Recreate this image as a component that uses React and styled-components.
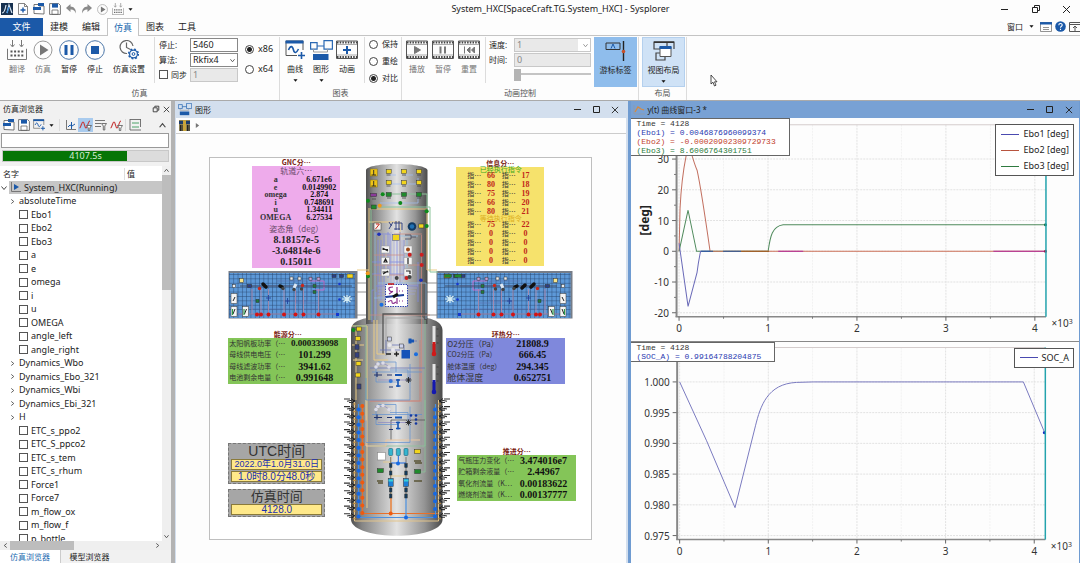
import React from 'react'
import styled, { createGlobalStyle, css } from 'styled-components'

const GlobalStyle = createGlobalStyle`
  * { box-sizing: border-box; }
  body {
    margin: 0;
    background: #fdfdfd;
    color: #222;
    font: 9px/12px 'Noto Sans', 'Noto Sans CJK SC', sans-serif;
    overflow: hidden;
  }
  button, input, select {
    font: inherit;
    color: inherit;
    margin: 0;
    padding: 0;
    border-radius: 0;
  }
  button {
    border: 0;
    background: none;
  }
  svg { display: block; flex: none; }
`

const BLUE = '#1b59a8'

/* ---------- shell ---------- */

const Shell = styled.div`
  height: 100vh;
  display: flex;
  flex-direction: column;
`

const TitleBar = styled.header`
  height: 18px;
  display: grid;
  grid-template-columns: 1fr auto 1fr;
  align-items: center;
  padding: 0 8px 0 1px;
`

const QuickAccess = styled.div`
  display: flex;
  align-items: center;
  gap: 4px;
`

const AppTitle = styled.h1`
  margin: 0 0 0 48px;
  font-size: 9px;
  font-weight: 400;
`

const WindowButtons = styled.div`
  display: flex;
  justify-content: flex-end;
  gap: ${({ gap }) => gap || 8}px;
`

const IconButton = styled.button`
  display: flex;
  align-items: center;
  justify-content: center;
  height: 14px;
  min-width: ${({ w }) => w || 11}px;
  background: ${({ active }) => (active ? '#a9cbee' : 'none')};
  color: #333;
`

const TabBar = styled.nav`
  height: 18px;
  display: flex;
  border-bottom: 1px solid #c4c4c4;
`

const RibbonTab = styled.button`
  width: 32px;
  height: 18px;
  ${({ file }) =>
    file &&
    css`
      width: 43px;
      color: #fff;
      background: ${BLUE};
    `}
  ${({ active }) =>
    active &&
    css`
      color: #1c6ab0;
      background: #fff;
      border: 1px solid #c4c4c4;
      border-bottom: 0;
    `}
`

const TabTools = styled.div`
  margin-left: auto;
  display: flex;
  align-items: center;
  gap: 3px;
  font-size: 8px;
`

/* ---------- ribbon ---------- */

const Ribbon = styled.div`
  height: 65px;
  display: flex;
  padding-top: 1px;
  border-bottom: 1px solid #aaa;
`

const Group = styled.section`
  display: flex;
  flex-direction: column;
  flex: none;
  width: ${({ w }) => w}px;
  border-right: 1px solid #dcdcdc;
`

const GroupBody = styled.div`
  display: flex;
  height: 50px;
  padding-left: ${({ inset }) => inset || 4}px;
`

const GroupName = styled.div`
  text-align: center;
  font-size: 8px;
  color: #555;
`

const ToolButton = styled.button`
  flex: none;
  width: ${({ w }) => w || 26}px;
  display: flex;
  flex-direction: column;
  align-items: center;
  gap: 3px;
  padding-top: 3px;
  font-size: 8px;
  white-space: nowrap;
  color: ${({ dim }) => (dim ? '#777' : '#222')};
  background: ${({ tone }) => tone || 'none'};
  border: ${({ line }) => (line ? `1px solid ${line}` : '0')};
`

const Separator = styled.div`
  flex: none;
  width: 1px;
  height: ${({ h }) => h || 46}px;
  margin: 0 ${({ gap }) => gap || 4}px;
  background: #dcdcdc;
`

const Fields = styled.div`
  flex: none;
  display: grid;
  grid-template-columns: ${({ labelW }) => labelW}px ${({ w }) => w}px;
  grid-auto-rows: 15px;
  align-items: center;
  margin-right: ${({ after }) => after}px;
  font-size: 8px;
`

const Field = styled.input`
  width: 100%;
  height: 14px;
  padding: 0 2px;
  border: 1px solid ${({ disabled }) => (disabled ? '#c8c8c8' : '#888')};
  background: ${({ disabled }) => (disabled ? '#e9e9e9' : '#fff')};
  color: ${({ disabled }) => (disabled ? '#888' : '#222')};
  font-size: 9px;
`

const SelectBox = styled.span`
  position: relative;
  select {
    display: block;
    width: 100%;
    height: 14px;
    padding: 0 2px;
    appearance: none;
    font-size: 9px;
    border: 1px solid ${({ off }) => (off ? '#c8c8c8' : '#888')};
    background: ${({ off }) => (off ? 'linear-gradient(90deg, #e9e9e9 63px, #fff 63px)' : '#fff')};
    color: ${({ off }) => (off ? '#888' : '#222')};
    opacity: 1;
  }
  svg {
    position: absolute;
    right: 3px;
    top: 5px;
  }
`

const Check = styled.label`
  display: flex;
  align-items: center;
  gap: 3px;
  input {
    appearance: none;
    width: 9px;
    height: 9px;
    flex: none;
    border: 1px solid #555;
    background: #fff;
  }
`

const RadioStack = styled.fieldset`
  margin: 0;
  padding: ${({ top }) => top}px 0 0 0;
  border: 0;
  display: flex;
  flex-direction: column;
  gap: ${({ gap }) => gap}px;
  font-size: ${({ size }) => size || 8}px;
  label {
    display: flex;
    align-items: center;
    gap: 4px;
    height: 12px;
  }
  input {
    appearance: none;
    width: 9px;
    height: 9px;
    border: 1px solid #444;
    border-radius: 50%;
    background: #fff;
  }
  input:checked {
    background: radial-gradient(circle, #222 0 2px, #fff 3px);
  }
`

const Slider = styled.input`
  appearance: none;
  width: 100%;
  height: 12px;
  background: linear-gradient(#c4c4c4, #c4c4c4) 0 4px / 100% 2px no-repeat;
  &::-webkit-slider-thumb {
    appearance: none;
    width: 7px;
    height: 12px;
    background: #b4b4b4;
  }
`

const Pointer = styled.svg`
  position: absolute;
  left: 710px;
  top: 74px;
`

/* ---------- workspace ---------- */

const Workspace = styled.main`
  flex: 1;
  min-height: 0;
  display: grid;
  grid-template-columns: 175px minmax(0, 1fr) minmax(0, 1fr);
`

const Dock = styled.aside`
  min-height: 0;
  display: flex;
  flex-direction: column;
  background: #f1f1f1;
  border-right: 4px solid #b3b3b3;
`

const DockHeader = styled.div`
  height: 16px;
  display: flex;
  align-items: center;
  justify-content: space-between;
  padding: 0 0 0 3px;
  font-size: 8px;
`

const DockTools = styled.div`
  height: 16px;
  display: flex;
  align-items: center;
  padding: 0 3px 0 2px;
  gap: 1px;
  & > :last-child {
    margin-left: auto;
  }
`

const Search = styled.input`
  height: 15px;
  margin: 0 2px 2px 1px;
  border: 1px solid #999;
  background: #fff;
`

const Progress = styled.div`
  height: 12px;
  margin: 0 2px;
  background: #dcdcdc;
  border: 1px solid #c8c8c8;
  display: grid;
  text-align: center;
  line-height: 10px;
  color: #d8ecd8;
  div,
  span {
    grid-area: 1 / 1;
  }
  div {
    background: #067506;
  }
`

const Browser = styled.div`
  flex: 1;
  min-height: 0;
  margin-top: 4px;
  display: grid;
  grid-template-columns: 1fr 9px;
  background: #fff;
`

const TreePane = styled.div`
  min-height: 0;
  overflow: hidden;
`

const TreeHead = styled.div`
  height: 15px;
  display: grid;
  grid-template-columns: 121px 1fr;
  align-items: center;
  padding-left: 3px;
  font-size: 8px;
  span + span {
    border-left: 1px solid #ddd;
    padding-left: 2px;
  }
`

const Tree = styled.ul`
  list-style: none;
  margin: 0;
  padding: 0;
`

const TreeRow = styled.li`
  height: 13px;
  display: flex;
  align-items: center;
  gap: ${({ selected }) => (selected ? 3 : 4)}px;
  padding-left: ${({ depth }) => [1, 10, 19][depth]}px;
  background: ${({ selected }) =>
    selected ? 'linear-gradient(90deg, transparent 9px, #c6c6c6 9px)' : 'none'};
  white-space: nowrap;
  &:nth-child(even) {
    height: 14px;
  }
`

const ScrollY = styled.div`
  display: grid;
  grid-template-rows: 9px 115px 1fr 9px;
  justify-items: stretch;
  align-items: center;
  background: #efefef;
  div {
    height: 100%;
    background: #bdbdbd;
  }
  svg {
    margin: 0 auto;
  }
`

const ScrollX = styled.div`
  height: 9px;
  display: grid;
  grid-template-columns: 10px 64px 1fr 10px 9px;
  align-items: center;
  background: #efefef;
  div {
    height: 9px;
    background: #bdbdbd;
  }
  svg {
    margin: 0 auto;
  }
`

const DockTabs = styled.div`
  height: 13px;
  display: flex;
  font-size: 8px;
`

const DockTab = styled.button`
  width: ${({ active }) => (active ? 61 : 57)}px;
  border-right: ${({ active }) => (active ? '1px solid #ccc' : '0')};
  color: ${({ active }) => (active ? '#1c6ab0' : '#222')};
  background: ${({ active }) => (active ? '#fff' : '#f1f1f1')};
`

const SubWindow = styled.section`
  min-height: 0;
  min-width: 0;
  display: flex;
  flex-direction: column;
  background: #fdfdfd;
  border: 0 solid ${({ focused }) => (focused ? '#6f9bd1' : '#d3dfee')};
  border-left-width: ${({ focused }) => (focused ? 3 : 1)}px;
  border-right-width: ${({ focused }) => (focused ? 1 : 2)}px;
`

const SubHeader = styled.div`
  height: 17px;
  flex: none;
  display: flex;
  align-items: center;
  gap: 3px;
  padding: 0 5px 0 2px;
  font-size: 8px;
  background: ${({ focused }) => (focused ? '#78a1d4' : '#d3dfee')};
  ${WindowButtons} {
    margin-left: auto;
  }
`

const PathBar = styled.div`
  height: 16px;
  flex: none;
  display: flex;
  align-items: center;
  gap: 5px;
  padding-left: 3px;
  border-bottom: 1px solid #ccc;
`

const DiagramArea = styled.div`
  flex: 1;
  min-height: 0;
  display: flex;
  align-items: center;
  justify-content: center;
`

/* free canvas: panels are placed at model coordinates */
const Canvas = styled.div`
  position: relative;
  flex: none;
  width: 383px;
  height: 383px;
  border: 1px solid #bfbfbf;
  background: #fff;
  font-family: 'Noto Sans CJK SC', sans-serif;
  & > svg {
    position: absolute;
    left: -1px;
    top: -1px;
  }
`

const Node = styled.div`
  position: absolute;
  left: ${({ x }) => x}px;
  top: ${({ y }) => y}px;
  width: ${({ w }) => w}px;
`

const NodeTitle = styled.div`
  height: 8px;
  line-height: 8px;
  text-align: center;
  font-size: 7px;
  font-weight: 700;
  color: #7a2211;
`

const Panel = styled.div`
  height: ${({ h }) => h}px;
  background: ${({ bg }) => bg};
  color: #333;
`

const Caption = styled.div`
  text-align: center;
  font-size: 8px;
  line-height: ${({ h }) => h || 10}px;
  height: ${({ h }) => h || 10}px;
  color: ${({ tone }) => tone || '#6a4a6a'};
`

const DataTable = styled.table`
  width: 100%;
  height: ${({ h }) => h}px;
  border-collapse: collapse;
  table-layout: fixed;
  th,
  td {
    padding: 0;
    line-height: 7px;
    white-space: nowrap;
    text-align: ${({ align }) => align || 'left'};
  }
  th {
    width: ${({ labelW }) => labelW};
    font-size: 7px;
    font-weight: 400;
    padding-left: 1px;
  }
  td {
    text-align: center;
    color: ${({ ink }) => ink || '#111'};
    font: 700 ${({ size }) => size || 10}px/7px 'Liberation Serif', serif;
  }
`

const NameCell = styled.th`
  && {
    font: 700 8px/7px 'Liberation Serif', serif;
  }
`

const LabelCell = styled.th`
  && {
    font-size: ${({ size }) => size || 7}px;
  }
`

const ValueCell = styled.td`
  && {
    font-size: ${({ long }) => (long ? 9 : 10)}px;
  }
`

const Angles = styled.div`
  display: grid;
  height: 34px;
  grid-template-rows: repeat(3, 1fr);
  align-items: center;
  text-align: center;
  font: 700 10px/10px 'Liberation Serif', serif;
  color: #222;
`

const Clock = styled.div`
  display: flex;
  flex-direction: column;
  gap: 1px;
  padding: 1px 2px;
  border: 1px dashed #777;
  background: #a6a6a6;
  text-align: center;
  font-family: 'Liberation Sans', 'Noto Sans CJK SC', sans-serif;
  h2 {
    margin: 0;
    font-size: ${({ size }) => size}px;
    line-height: ${({ size }) => size - 1}px;
    font-weight: 400;
    color: #333;
  }
`

const ClockValue = styled.output`
  height: 11px;
  line-height: 9px;
  border: 1px solid #8a7a3a;
  background: #ffe98a;
  color: #1a2fb0;
  font-size: ${({ size }) => size || 10}px;
  white-space: nowrap;
`

const Plots = styled.div`
  flex: 1;
  min-height: 0;
  display: grid;
  grid-template-rows: 1fr 1fr;
`

const PlotBox = styled.div`
  position: relative;
  min-height: 0;
  & + & {
    border-top: 1px solid #888;
  }
  & > svg {
    width: 100%;
    height: 100%;
  }
`

const Readout = styled.div`
  position: absolute;
  left: 0;
  top: 0;
  padding: 0 5px 0 6px;
  min-width: ${({ w }) => w}px;
  border: 1px solid #666;
  border-left: 0;
  background: #fff;
  font: 8px/9px 'Liberation Mono', monospace;
  white-space: pre;
`

const ReadoutLine = styled.div`
  color: ${({ color }) => color};
`

const Legend = styled.div`
  position: absolute;
  right: 5px;
  top: 6px;
  padding: 1px 4px 1px 5px;
  border: 1px solid #555;
  background: #fff;
  div {
    display: flex;
    align-items: center;
    gap: 4px;
    height: 16px;
  }
`

const LegendLine = styled.i`
  width: 18px;
  height: 1px;
  background: ${({ color }) => color};
`

/* ---------- icons ---------- */

const Chevron = ({ dir = 'down', size = 5, color = '#444' }) => {
  const turn = { down: 0, up: 180, left: 90, right: -90 }[dir]
  return (
    <svg width={size} height={size} viewBox="0 0 6 6" fill="none" stroke={color} strokeWidth="1">
      <path d="M0.5 1.5 3 4.5 5.5 1.5" transform={`rotate(${turn} 3 3)`} />
    </svg>
  )
}

const Caret = ({ right }) => (
  <svg width="5" height="5" viewBox="0 0 6 6" fill={right ? '#777' : '#111'}>
    <path d={right ? 'M1 0 5 3 1 6Z' : 'M0.5 1.5h5L3 4.5Z'} />
  </svg>
)

const Minimize = () => (
  <svg width="9" height="9" viewBox="0 0 9 9" stroke="#222"><path d="M1 4.5h7" /></svg>
)
const Maximize = () => (
  <svg width="9" height="9" viewBox="0 0 9 9" fill="none" stroke="#222"><path d="M1.5 1.5h6v6h-6z" /></svg>
)
const Restore = ({ size = 10 }) => (
  <svg width={size} height={size} viewBox="0 0 10 10" fill="none" stroke="#222">
    <path d="M1.5 3.5h5v5h-5zM3.5 3V1.5h5v5H7" />
  </svg>
)
const Close = ({ size = 9 }) => (
  <svg width={size} height={size} viewBox="0 0 9 9" stroke="#222"><path d="M1 1l7 7M8 1l-7 7" /></svg>
)

const Logo = () => (
  <svg width="12" height="12" viewBox="0 0 12 12">
    <path fill="#16304f" d="M0 0h12v12H0z" />
    <path d="M1 10C3 10 4 8 5 2M6 10 8 2l3 8" fill="none" stroke="#d8e6f4" strokeWidth="1.2" />
    <path d="M6 10 8 4" stroke="#2f86d8" strokeWidth="1.2" />
  </svg>
)
const NewFile = () => (
  <svg width="12" height="12" viewBox="0 0 12 12" fill="none" stroke="#666" strokeWidth=".8">
    <path d="M1.5.5h6l3 3v8h-9zM7.5.5v3h3" />
    <path d="M6 4.5v5M3.5 7h5" stroke={BLUE} strokeWidth="1.4" />
  </svg>
)
const OpenFile = () => (
  <svg width="12" height="12" viewBox="0 0 12 12">
    <path d="M1 10.5v-9h4l1 1.5h5v8z" fill="#fff" stroke="#555" strokeWidth=".8" />
    <path d="M0 4h8v3H0zM5 0h6v3H5z" fill={BLUE} />
  </svg>
)
const Save = () => (
  <svg width="12" height="12" viewBox="0 0 12 12">
    <path d="M.6.6h9l1.8 1.8v9H.6z" fill="#fff" stroke="#666" strokeWidth=".9" />
    <path d="M3 .6h6v4H3z" fill={BLUE} />
    <path d="M3 7h6v4.4H3z" fill="none" stroke="#666" strokeWidth=".8" />
  </svg>
)
const Undo = ({ flip }) => (
  <svg width="12" height="12" viewBox="0 0 12 12" transform={flip ? 'scale(-1 1)' : undefined}>
    <path d="M5.5 1 1 5l4.500 4V6.500C8 6.300 10 7.500 11 10.500 11 6 9 3.700 5.500 3.500z" fill="#8a8a8a" />
  </svg>
)
const PlayRound = ({ size = 11, color = '#aaa', ring = 1.4 }) => (
  <svg width={size} height={size} viewBox="0 0 20 20" fill="none">
    <circle cx="10" cy="10" r="9" stroke={color} strokeWidth={ring} />
    <path d="M7 4.500 15.500 10 7 15.500Z" fill="#777" />
  </svg>
)
const PauseRound = () => (
  <svg width="20" height="20" viewBox="0 0 20 20" fill="none">
    <circle cx="10" cy="10" r="9.300" stroke="#4b76a8" />
    <path d="M5.500 5h3v10h-3zM11.500 5h3v10h-3z" fill={BLUE} />
  </svg>
)
const StopRound = () => (
  <svg width="20" height="20" viewBox="0 0 20 20" fill="none">
    <circle cx="10" cy="10" r="9.300" stroke="#4b76a8" />
    <path d="M6 6h8v8H6z" fill={BLUE} />
  </svg>
)
const Translate = ({ size = 20 }) => (
  <svg width={size} height={size} viewBox="0 0 20 20" fill="none" stroke="#777">
    <path d="M5.500 0v6M3.500 4.500l2 2.500 2-2.500M14.500 0v6M12.500 4.500l2 2.500 2-2.500M1 9H.5v10.500h19V9H19" />
    <path d="M3.500 11.500h13M3.500 15.500h13" strokeWidth="2" strokeDasharray="2 1.600" stroke="#555" />
  </svg>
)
const SimSetup = () => (
  <svg width="20" height="20" viewBox="0 0 20 20" fill="none">
    <path d="M8 13.500A6.500 6.500 0 1 1 14 6M7.500 2.500v5l4 2" stroke="#666" strokeWidth="1.200" />
    <circle cx="14.500" cy="14" r="3.900" stroke={BLUE} strokeWidth="1.200" />
    <circle cx="14.500" cy="14" r="4.900" stroke={BLUE} strokeWidth="1.400" strokeDasharray="1.900 1.950" />
    <circle cx="14.500" cy="14" r="1.400" stroke={BLUE} />
  </svg>
)
const CurveIcon = ({ size = 20 }) => (
  <svg width={size} height={size} viewBox="0 0 20 20" fill="none">
    <path d="M12 15.500H1V1h17v9" stroke="#555" />
    <path d="M.5.5h18v3H.5z" fill={BLUE} />
    <path d="M3.500 10c2-5 4-4 5 0s3 3 5-1M16.500 12v7M13 15.500h7" stroke={BLUE} strokeWidth="1.600" />
  </svg>
)
const GraphIcon = ({ size = 23 }) => (
  <svg width={size} height={size * 20 / 23} viewBox="0 0 23 20" fill="none">
    <path d="M.6 2.600h6.500v6.500H.6zM14 .6h8.400v8.500H14zM7 6h7" stroke="#2b69b3" strokeWidth="1.200" />
    <path d="M3.500 9v3h14V9" stroke="#999" />
    <path d="M3 14h15.500v6H3z" fill={BLUE} />
  </svg>
)
const Film = ({ children, color = '#777' }) => (
  <svg width="22" height="20" viewBox="0 0 22 20" fill="none">
    <path d="M.5 1h21v17.500H.5z" stroke="#555" />
    <path d="M1 2.500h20M1 17h20" stroke="#444" strokeWidth="2" strokeDasharray="1.500 1.200" />
    <path d="M1 4.500h20M1 15h20" stroke="#888" strokeWidth=".7" />
    <g fill={color} stroke={color}>{children}</g>
  </svg>
)
const CursorTag = () => (
  <svg width="22" height="20" viewBox="0 0 22 20" fill="none">
    <path d="M1 2h14v6.500H1z" stroke="#333" />
    <path d="M6 7.500 8 3l2 4.500" stroke={BLUE} />
    <path d="M18.500 0v20" stroke="#222" strokeWidth="1.400" />
    <circle cx="18.500" cy="10.500" r="1.800" fill="#c8512a" />
  </svg>
)
const LayoutIcon = () => (
  <svg width="22" height="20" viewBox="0 0 22 20" fill="none">
    <path d="M1 1h13v7H1zM8 1h13v7M3 12h9v7H3z" stroke="#444" strokeWidth="1.200" />
    <path d="M1 1.200h20" stroke="#333" strokeWidth="1.600" />
    <path d="M7 6h11v9.500H7z" fill="#fff" stroke="#555" />
    <path d="M6.500 5h12v3h-12z" fill={BLUE} />
  </svg>
)
const AxisIcon = ({ color = BLUE, fill }) => (
  <svg width="11" height="11" viewBox="0 0 11 11" fill="none" stroke="#777">
    <path d="M1.500 0v9.500H11" />
    {fill ? <path d="M4 2v6l5-3z" fill={color} stroke="none" /> : <path d="M3 7l2-2 2 1 3-2M6.500 2v7" stroke={color} />}
  </svg>
)
const WaveIcon = () => (
  <svg width="13" height="12" viewBox="0 0 13 12" fill="none">
    <path d="M.5 9C2 9 2.500 3 4 3s1.500 6 3 6 2-7 4-7" stroke="#c63a3a" strokeWidth="1.100" />
    <path d="M7.500 6.500h5L10.800 9v2.500H9.300V9z" fill="#fff" stroke="#555" strokeWidth=".8" />
  </svg>
)
const ListFilterIcon = () => (
  <svg width="12" height="12" viewBox="0 0 12 12" fill="none" stroke="#666" strokeWidth=".9">
    <path d="M0 1.500h10M0 4.500h6M0 7.500h6M6.500 4.500h5L9.800 7v4H8.300V7z" />
  </svg>
)
const GridIcon = () => (
  <svg width="12" height="12" viewBox="0 0 12 12" fill="none" stroke="#666" strokeWidth=".9">
    <path d="M1 0v11h11M1 .5h11M11.500 0v8" />
    <path d="M3 4h7M3 8h7" stroke="#3a9a5a" />
  </svg>
)
const SheetIcon = () => (
  <svg width="12" height="10" viewBox="0 0 12 10" fill="none" stroke="#777">
    <path d="M.5.5h11v9H.5zM3 5.500h6M3 7.500h6" strokeWidth=".8" />
    <path d="M0 1.300h12" stroke={BLUE} strokeWidth="2.400" />
  </svg>
)
const HelpIcon = () => (
  <svg width="11" height="11" viewBox="0 0 11 11" fill="none">
    <circle cx="5.500" cy="5.500" r="5.300" fill={BLUE} />
    <path d="M3.800 4.200c0-2.300 3.400-2.200 3.400-.2 0 1.300-1.700 1.300-1.700 2.700M5.500 7.700v1.200" stroke="#fff" strokeWidth="1.100" />
  </svg>
)
const PinIcon = () => (
  <svg width="11" height="10" viewBox="0 0 11 10" fill="none" stroke="#555">
    <path d="M.5.5h12v9H.5zM0 2.500h11M6 9V4M4 6l2-2 2 2" />
  </svg>
)
const CraftIcon = () => (
  <svg width="11" height="11" viewBox="0 0 11 11">
    <path d="M0 0h11v11H0z" fill="#8a7f55" />
    <path d="M0 1h11v3H0z" fill="#1d3c6b" />
    <path d="M4 0h3v11H4z" fill="#c9a43a" />
    <path d="M1.500 5v6M3 5v6M8.500 5v6M10 5v6" stroke="#222" />
  </svg>
)
const PlotIcon = () => (
  <svg width="12" height="10" viewBox="0 0 12 10" fill="none">
    <path d="M1 0v9h11" stroke="#8c9bb0" />
    <path d="M2 7 5 2l3 2 3 1" stroke="#d98a3c" strokeWidth="1.300" />
  </svg>
)

/* ---------- spacecraft diagram ---------- */

const steps = (n, from, gap) => Array.from({ length: n }, (_, i) => from + i * gap)

const Dots = ({ at, fill, r = 2 }) =>
  at.map(([x, y]) => <circle key={`${x}-${y}`} cx={x} cy={y} r={r} fill={fill} />)

const Boxes = ({ at, fill, w = 5, h = 4, stroke = '#333' }) =>
  at.map(([x, y]) => (
    <rect key={`${x}-${y}`} x={x - w / 2} y={y - h / 2} width={w} height={h} fill={fill} stroke={stroke} strokeWidth=".5" />
  ))

const WingParts = () => (
  <g>
    <path d="M249 286h88M252 286v23h82M277 281h30v20h-22v8M296 291v12h22" fill="none" stroke="#5569a8" strokeWidth=".6" />
    <path d="M310 281h14v9h-9" fill="none" stroke="#c86ac8" strokeWidth=".9" />
    <path d="M252 289v25M261 289v25M268.500 289v25M284 289v25M295.500 289v25M303.500 289v25M318.500 289v25M238 314h98" fill="none" stroke="#b58aa8" strokeWidth=".8" />
    <path d="M240 286h112" stroke="#3a4050" strokeWidth=".8" />
    <Boxes at={[[234, 298.500], [234, 311.500], [245.500, 311.500]]} w={6} h={10} fill="#f4f4f4" />
    <path d="M233 301l2-4M233 314l2-5M244.500 314l2-5" stroke="#222" />
    <path d="M232.500 309v6M244 309v6" stroke="#2a9a4a" strokeWidth="1.200" />
    <Boxes at={[[241.700, 280.500]]} w={4} h={4} fill="#f6e58a" />
    <Boxes at={[[234, 286], [291.500, 278.500], [299.500, 278.500]]} w={3} h={3} fill="#eee" />
    <Boxes at={[[310.500, 278.700], [318.500, 278.700]]} w={3} h={3} fill="#c7a0d8" />
    <Boxes at={[[249.500, 286], [334, 276], [341.500, 276]]} w={4} h={3} fill="#2b3f86" />
    <path d="M263 284l3 3M280 286l2 1" stroke="#111" strokeWidth="3.500" strokeLinecap="round" />
    <path d="M294 288l2-4" stroke="#dfe9f4" strokeWidth="3" />
    <Dots at={[[259.500, 288.500], [302.500, 285.500]]} r={1.700} fill="#c8281c" />
    <Dots at={[[283, 288.500], [294, 289.500], [301.500, 289]]} r={1.700} fill="#444" />
    <Boxes at={[[257.500, 301], [314.500, 286], [314.500, 292]]} w={3} h={3} fill="#1f7a3a" />
    <path d="M266 298h5M268.500 295v6M285 301h5M287.500 298v6" stroke="#24439c" strokeWidth=".9" />
    <Boxes at={[[350, 276]]} w={6} h={4} fill="#f2d51c" />
    <path d="M342 299h10M347 295v8M343.500 296l7 6M350.500 296l-7 6" stroke="#d8eef4" strokeWidth="1.200" />
    <Dots at={[[339.500, 284], [339.500, 299.500]]} r={1.300} fill="#1438d0" />
    <Boxes at={[[337.500, 314.500]]} w={3} h={3} fill="#1438d0" stroke="none" />
    <Dots at={[[257, 314.500], [261, 314.500], [268.500, 314.500], [284, 314.500], [295.500, 314.500], [303.500, 314.500], [318.500, 314.500]]} fill="#d31414" />
  </g>
)

const Coil = ({ x, y, flip }) => (
  <g transform={`translate(${x} ${y}) scale(${flip ? -1 : 1} 1)`}>
    <path d="M0 -1.500h6M3 .8l5-1M5 2h4" stroke="#333" strokeWidth="1.100" />
    <path d="M7 -2l4 3M8 2.500l3-3" stroke="#1d1d1d" />
    <path d="M9 3.500h3" stroke="#b8863a" />
  </g>
)

const FluidLoop = ({ y }) => (
  <g transform={`translate(0 ${y})`}>
    <path d="M366 6v22h44V-8M372 0h50M378-10h18v10M376-6v16h22M390-2h18v12" fill="none" stroke="#5f8fd0" strokeWidth=".7" />
    <path d="M375-8h10l6 4M378 8h32V2" fill="none" stroke="#8a86c4" strokeWidth=".7" />
    <Dots at={[[378, -8], [376, -5], [389, -5], [383, -9]]} r={1.800} fill="#dcdce8" />
    <path d="M374 3h8M377 0v5M387 3h5M389 15h4" stroke="#22346e" strokeWidth="1.200" />
    <path d="M395 3h7" stroke="#1554b4" strokeWidth="2" />
    <path d="M398 7v8M396 8h4M396 14h4.500" stroke="#1554b4" strokeWidth="1.600" />
    <path d="M405.500 8h6M408.500 5v6M406.500 6l4 4M410.500 6l-4 4" stroke="#222" strokeWidth=".9" />
  </g>
)

const Spacecraft = () => (
  <svg width="383" height="382" viewBox="209 157 383 382">
    <defs>
      <linearGradient id="hull">
        <stop offset="0" stopColor="#4f4f4f" />
        <stop offset=".12" stopColor="#858585" />
        <stop offset=".5" stopColor="#e2e2e2" />
        <stop offset=".8" stopColor="#959595" />
        <stop offset="1" stopColor="#4a4a4a" />
      </linearGradient>
      <pattern id="cells" x="229" y="274" width="4.300" height="4.400" patternUnits="userSpaceOnUse">
        <rect width="4.300" height="4.400" fill="#5d99d8" />
        <path d="M0 0h4.300M0 0v4.400" stroke="#26456e" strokeWidth=".9" />
      </pattern>
    </defs>

    <path d="M357 283h12M357 292h12M427 283h12M427 292h12M345 315h110" stroke="#777" strokeWidth=".8" fill="none" />
    <rect x="228.500" y="271" width="129" height="47.500" fill="#767d88" />
    <rect x="229" y="273" width="126" height="45" fill="url(#cells)" />
    <rect x="436.500" y="271" width="136" height="47.500" fill="#767d88" />
    <rect x="437.500" y="273" width="133" height="45" fill="url(#cells)" />
    <WingParts />
    <g transform="translate(797 0) scale(-1 1)"><WingParts /></g>
    <Boxes at={[[448, 275.800], [458, 275.800]]} w={7} h={3} fill="#1f8a2c" />
    <path d="M522 288l3-3" stroke="#111" strokeWidth="3.500" strokeLinecap="round" />

    <path d="M351 330q0-9 16-12h60q15 3 15.500 12v190c-2 21-89 21-91.500 0z" fill="url(#hull)" />
    <path d="M366 170c2-8 58-8 61.500 0v154h-61.500z" fill="url(#hull)" />

    {/* piping and buses */}
    <g fill="none" strokeWidth="1">
      <path d="M369 210v110M369 270h-12M368 209h59M369 222h31v60M427 210v60h10" stroke="#eacb84" />
      <path d="M371 209v111M380 194h47v14M371 207h59v65h8" stroke="#8cc39a" />
      <path d="M390 175h6M405 175h8M390 184h28v-6M380 203h38v-8" stroke="#a2bdf0" strokeWidth=".7" />
      <path d="M374 234h16v40M378 240v55M381 240v60M384 235v50M388 232v46M397 236v50M400 232v62M404 240v40M372 262h35M372 274h35M376 286h42M374 290h-2v32M376 292v24M418 262v40" stroke="#7f88e0" strokeWidth=".8" />
      <path d="M378 285h8M378 288h8M378 291h8M378 294h8M378 297h8M378 300h8M408 285h10M408 288h9M408 291h8M408 294h7M391 232v52M394 236v48M402 240v44" stroke="#9aa2e4" strokeWidth=".6" />
      <path d="M375 232v88M378 283h48v36M374 298h12M407 238v30M394 236h24" stroke="#8fbfe8" strokeWidth=".7" />
      <path d="M421.500 235v165M394 234h28M408 265h14M374 265h30M374 255h30M374 275h30M369 401h53M370 315h60" stroke="#d08a80" strokeWidth=".7" />
      <path d="M383 354v-40h44" stroke="#555" strokeWidth="1.300" />
      <path d="M386 356v-38h37v130" stroke="#a5a5a5" />
      <path d="M377 320v34h8M374 320v40h14M352 326h15v182M356 330v70M363 360h-10M352 345h12" stroke="#eacb84" />
      <path d="M353 326h13v90M370 446h55V400M425 320v152h-12" stroke="#8cc39a" strokeWidth=".8" />
      <path d="M391 440v-20h34" stroke="#555" strokeWidth=".8" />
      <path d="M370 401h50V340" stroke="#cf7d70" strokeWidth=".7" />
      <path d="M366 400v46h20v-6h34" stroke="#eac6a0" />
      <path d="M391 452v60M391 476h15M391 462h-8" stroke="#eacb84" strokeWidth=".8" />
      <path d="M362.500 404v109.500h75M391 496v17" stroke="#e8702a" strokeWidth="1.200" />
      <path d="M358.500 404v113.500h77V404M406 496v21" stroke="#4a90e0" strokeWidth="1.200" />
      <path d="M354.500 402v119h84V400" stroke="#e3c48a" />
    </g>

    {/* upper stage */}
    <Boxes at={[[373.700, 172.500], [373.700, 183.500]]} w={7} h={7} fill="#edc417" stroke="#8a7310" />
    <path d="M373.700 170v5M371.500 175h4.500M373.700 181v5M371.500 186h4.500" stroke="#222" strokeWidth=".9" />
    <Boxes at={[[388.700, 171.500], [404, 171.500], [419, 171.500], [404, 182.500], [419, 182.500], [388.700, 182.500], [421.300, 226]]} fill="#f2d51c" />
    <path d="M386.500 175h4M402 175h4M417 175h4M402 186h4M417 186h4M386.500 186h4M387 198h4M402 198h4M417 198h4M372 199h4" stroke="#444" strokeWidth=".8" />
    <Boxes at={[[388.700, 194.500], [404, 194.500], [419, 194.500], [373.700, 207]]} w={5} h={4} fill="#1f8a2c" />
    <Boxes at={[[373.700, 195]]} w={6} h={3} fill="#8a3a9a" />
    <Boxes at={[[377.500, 226.500]]} w={7} h={7} fill="#f6f1ee" />
    <path d="M375.500 229l4-5M376 224h3" stroke="#c8281c" />
    <path d="M389 222l2.500 4M393 222l-4 7M394 223h8M396 221v9M399 221v9M402 223v7M394 229h6" stroke="#2a3a7a" strokeWidth=".9" fill="none" />
    <circle cx="412" cy="226.500" r="4.300" fill="#123a63" />
    <circle cx="412" cy="226.500" r="2.200" fill="#2272b4" />
    <Boxes at={[[396, 237.500]]} w={7} h={6} fill="#f2d51c" stroke="#3a4ab0" />
    <path d="M405 235h6v4h-6M411 237h5" stroke="#445" strokeWidth=".8" fill="none" />
    <Boxes at={[[385.300, 249.500], [385.300, 261], [385.300, 272.500], [408, 249.500], [408, 261], [408, 272.500]]} w={8} h={7} fill="#f4f4f4" stroke="#999" />
    <path d="M382.500 249.500h5.500M382.500 248l5.500 3M382.500 272h6M383 274l5-3M408 258v6M406 271h4v3M384 262l1.500-3 1.500 3z" stroke="#222" strokeWidth="1.200" fill="none" />
    <circle cx="408" cy="249.500" r="2" fill="#9a4a1a" />
    <Dots at={[[382.700, 194.300], [368, 200.700], [400.300, 203], [426.700, 211.300], [426.700, 226], [368, 276.300]]} fill="#0f8a1c" />
    <Dots at={[[379.700, 205.700], [367.700, 273.300]]} fill="#f09a1e" />
    <Dots at={[[421.700, 254.700], [421.700, 265], [409.700, 254.700], [406.500, 278]]} fill="#cc1f1f" />
    <Dots at={[[396.700, 278], [409.500, 277]]} fill="#444" />
    <Dots at={[[379, 234.300], [421, 280.300]]} r={1.800} fill="#1c2fb8" />

    <rect x="385.500" y="284.500" width="22" height="22" fill="#fff" stroke="#3345b0" strokeDasharray="1.500 1" />
    <path d="M393 287q-5 0-4 2.500t3 2-3 2.500M388 302q4-3 4 0t4 0M397 287v6M397 298v6M399 291h1M402 291h1M399 301h1M402 301h1" fill="none" stroke="#8a2a8a" strokeWidth="1.200" />
    <path d="M386 297l18-2" stroke="#1f3f9a" strokeWidth="1.800" />
    <path d="M393 297l5-3" stroke="#111" strokeWidth="3" />
    <path d="M388 284h6" stroke="#cc1f1f" strokeWidth="1.600" />
    <Dots at={[[381.500, 304.700]]} fill="#1a6ee0" />

    {/* lower stage */}
    <Dots at={[[353.500, 330]]} fill="#0f8a1c" />
    <Boxes at={[[359, 329], [358, 338.500], [358.500, 363.500], [358, 375]]} fill="#f2d51c" />
    <Boxes at={[[357, 347], [357, 355], [359, 386.500]]} w={4} h={5} fill="#34407c" />
    <path d="M380 350h20M386 340v14M392 345h12v8M408 341h9M370 368h55" stroke="#6a76b8" strokeWidth=".8" fill="none" />
    <Boxes at={[[389.500, 339], [401.500, 346]]} w={4} h={4} fill="#cdd3ee" />
    <Dots at={[[393, 350], [389.500, 345]]} r={2} fill="#e8e8ee" />
    <path d="M409 341h5M410 338.500v5" stroke="#1554b4" strokeWidth="3" />
    <rect x="401.500" y="350" width="8.500" height="8.500" fill="#1452b8" />
    <Dots at={[[416, 354.300], [390.700, 381], [398, 463.500]]} fill="#1a6ee0" />
    <path d="M386 354h5M394 354h5M396.500 351.500v5" stroke="#222" strokeWidth="1.400" />
    <FluidLoop y={372} />
    <FluidLoop y={414.500} />
    <Dots at={[[411, 415.500], [416, 415.500], [416, 419.500], [416, 423.500]]} r={1.300} fill="#1438a0" />

    {[[326, '#d01818'], [364, '#1418b0']].map(([y, color]) => (
      <g key={y}>
        <path d={`M434 ${y}v18`} stroke="#e4e4e4" strokeWidth="3" />
        <path d={`M434 ${y + 16}v12`} stroke={color} strokeWidth="3" />
        <circle cx="434" cy={y + 28} r="2.300" fill={color} />
        <path d={`M436.500 ${y + 3}h2M436.500 ${y + 10}h2M436.500 ${y + 17}h2`} stroke="#333" strokeWidth=".7" />
      </g>
    ))}

    {steps(16, 400.500, 7.650).map((y) => (
      <g key={y}>
        <Coil x={344} y={y} />
        <Coil x={450} y={y} flip />
        <circle cx="358.500" cy={y + 9} r="2" fill="#1668e4" visibility={y > 508 ? 'hidden' : 'visible'} />
        <circle cx="362.300" cy={y + 5.500} r="2" fill="#ee5a10" visibility={y > 512 ? 'hidden' : 'visible'} />
        <circle cx="435" cy={y + 9} r="2" fill="#1668e4" visibility={y > 508 ? 'hidden' : 'visible'} />
      </g>
    ))}

    <rect x="377.500" y="452.500" width="8" height="7.500" fill="#fff" stroke="#888" strokeWidth=".6" />
    {[390.700, 398.300, 406].map((x) => (
      <rect key={x} x={x - 2} y="448.500" width="4" height="7" rx="1" fill="#35b5cf" stroke="#1d5f7a" strokeWidth=".6" />
    ))}
    <path d="M390.700 457v38M406 457v38" stroke="#555" strokeWidth=".7" />
    <path d="M398.300 456v7H391M398 463h8" stroke="#1668e4" fill="none" />
    <Boxes at={[[390.700, 465.500], [406, 465.500], [390.700, 473], [406, 473], [390.700, 490], [406, 490], [390.700, 496], [406, 496]]} w={2.500} h={4} fill="#123a5a" />
    <Boxes at={[[390.700, 482.500], [406, 482.500]]} w={5} h={8} fill="#1a7fd8" />
    <path d="M388.500 480.500h4.500M404 480.500h4.500" stroke="#38d0d8" strokeWidth="2" />
    <Boxes at={[[380.300, 470.700], [417.700, 471.500]]} w={6} h={4} fill="#1f8a2c" />
    <Boxes at={[[417.300, 451.500]]} w={6} h={4} fill="#f2d51c" />
    <path d="M377 481h6M378 483h5M414 461h7M415 463h7M414 481h8" stroke="#5a5436" strokeWidth="1.500" />
    <Dots at={[[390.700, 513.500]]} fill="#ee5a10" />
    <Dots at={[[406, 517.500]]} fill="#1668e4" />
  </svg>
)

/* ---------- data ---------- */

const orbit = [
  ['a', '6.671e6'],
  ['e', '0.0149902'],
  ['omega', '2.874'],
  ['i', '0.748691'],
  ['u', '1.34411'],
  ['OMEGA', '6.27534'],
]
const doneCommands = [['66', '17'], ['80', '18'], ['75', '19'], ['66', '20'], ['80', '21']]
const waitingCommands = [['75', '22'], ['0', '0'], ['0', '0'], ['0', '0'], ['0', '0']]
const energy = [
  ['太阳帆板功率（…', '0.000339098'],
  ['母线供电电压（…', '101.299'],
  ['母线滤波功率（…', '3941.62'],
  ['电池剩余电量（…', '0.991648'],
]
const thermal = [
  ['O2分压（Pa）', '21808.9', 8],
  ['CO2分压（Pa）', '666.45', 7],
  ['舱体温度（deg）', '294.345', 7],
  ['舱体湿度', '0.652751', 9],
]
const propulsion = [
  ['气瓶压力变化（…', '3.474016e7'],
  ['贮箱剩余液量（…', '2.44967'],
  ['氧化剂流量（K…', '0.00183622'],
  ['燃烧剂流量（K…', '0.00137777'],
]

const variables = [
  '>absoluteTime', 'Ebo1', 'Ebo2', 'Ebo3', 'a', 'e', 'omega', 'i', 'u', 'OMEGA',
  'angle_left', 'angle_right', '>Dynamics_Wbo', '>Dynamics_Ebo_321', '>Dynamics_Wbi',
  '>Dynamics_Ebi_321', '>H', 'ETC_s_ppo2', 'ETC_S_ppco2', 'ETC_s_tem', 'ETC_s_rhum',
  'Force1', 'Force7', 'm_flow_ox', 'm_flow_f', 'p_bottle',
]

/* ---------- parts ---------- */

function Values({ rows }) {
  return (
    <DataTable h={45} labelW="45%">
      <tbody>
        {rows.map(([label, value, size]) => (
          <tr key={label}>
            <LabelCell size={size}>{label}</LabelCell>
            <ValueCell long={value.length > 10}>{value}</ValueCell>
          </tr>
        ))}
      </tbody>
    </DataTable>
  )
}

function Commands({ rows }) {
  return (
    <DataTable h={45} size={8} ink="#c0261a" labelW="22%">
      <tbody>
        {rows.map(([left, right], i) => (
          <tr key={i}>
            <th>指…</th>
            <td>{left}</td>
            <th>指…</th>
            <td>{right}</td>
          </tr>
        ))}
      </tbody>
    </DataTable>
  )
}

const CommandPanel = styled(Panel)`
  padding: 0 9px 0 10px;
  ${Caption} {
    font-size: 7px;
    line-height: 4px;
    height: 4px;
  }
`

const X0 = 48
const XK = 88.85

function Plot({ ticks, yOf, top, bottom, minor, unit, children, title }) {
  const right = 414.500
  return (
    <svg viewBox="0 0 448 222" fontSize="10" fill="#333" role="img" aria-label={title}>
      <g fill="none" stroke="#e2e2e2" strokeDasharray="2 1">
        {[0, 1, 2, 3, 4].map((n) => <path key={n} d={`M${X0 + n * XK} ${top}V${bottom}`} />)}
        {[0.5, 1.5, 2.5, 3.5].map((n) => <path key={n} stroke="#f2f2f2" d={`M${X0 + n * XK} ${top}V${bottom}`} />)}
        {ticks.map((t) => <path key={t} d={`M46 ${yOf(t)}H${right}`} />)}
        <path d={`M46 ${top}H${right}`} stroke="#d4cccc" strokeDasharray="none" />
      </g>
      <path d={`M45.500 ${top}V${bottom}`} stroke="#888" strokeWidth="2" />
      <path d={`M44.500 ${bottom}H${right}`} stroke="#888" strokeWidth="1.500" />
      {ticks.map((t) => (
        <g key={t}>
          <path d={`M41 ${yOf(t)}h4`} stroke="#666" />
          <text x="38" y={yOf(t) + 4} textAnchor="end">{unit(t)}</text>
        </g>
      ))}
      {minor.map((t) => <path key={t} d={`M43 ${yOf(t)}h2`} stroke="#777" />)}
      {[0, 1, 2, 3, 4].map((n) => (
        <g key={n}>
          <path d={`M${X0 + n * XK} ${bottom}v4`} stroke="#666" />
          <text x={X0 + n * XK} y={bottom + 15} textAnchor="middle">{n}</text>
        </g>
      ))}
      {[0.5, 1.5, 2.5, 3.5].map((n) => <path key={n} d={`M${X0 + n * XK} ${bottom}v2`} stroke="#777" />)}
      <text x="420" y={bottom + 10}>×10<tspan dy="-3" fontSize="7">3</tspan></text>
      {children}
      <path d={`M414.500 ${top}V${bottom}`} stroke="#23a3ad" strokeWidth="1.500" />
    </svg>
  )
}

const degY = (v) => 133 - v * 3.070
const socY = (v) => 40 + (1 - v) * 6160

function AnglePlot() {
  return (
    <PlotBox>
      <Plot title="Ebo [deg]" ticks={[30, 20, 10, 0, -10, -20]} minor={[25, 15, 5, -5, -15]} yOf={degY} top={6.500} bottom={198.500} unit={String}>
        <text transform="translate(18 102) rotate(-90)" textAnchor="middle" fontSize="12" fontWeight="700" fill="#222">[deg]</text>
        <g fill="none">
          <path d="M48 133 49 90C50 70 53 48 55 38 59 22 60 38 66 52 70 70 74 98 79 133" stroke="#c27060" />
          <path d="M48 133 57 92 65.500 133H137C139 118 141 108 152 106.500H414" stroke="#4f8a5c" />
          <path d="M48 125 57 188 66 154C67 146 68 140 69.500 133H79" stroke="#6a6ab8" />
          <path d="M79 133H414" stroke="#cc7058" />
          <path d="M70 133h12M92 133h18" stroke="#23559c" />
          <path d="M110 133h28" stroke="#9a5a1c" />
          <path d="M147 133h25M362 133h51" stroke="#b02a9a" />
        </g>
        <circle cx="414" cy="106.500" r="1.500" fill="#157048" />
        <circle cx="414" cy="133" r="1.500" fill="#a01c4c" />
      </Plot>
      <Readout w={159}>
        <ReadoutLine color="#333">Time = 4128</ReadoutLine>
        <ReadoutLine color="#2a3ab0">(Ebo1) = 0.0046876960099374</ReadoutLine>
        <ReadoutLine color="#c2432f">(Ebo2) = -0.00020902309729733</ReadoutLine>
        <ReadoutLine color="#2a7a3a">(Ebo3) = 8.6006764301751</ReadoutLine>
      </Readout>
      <Legend>
        <div><LegendLine color="#4a4ab0" />Ebo1 [deg]</div>
        <div><LegendLine color="#b8543f" />Ebo2 [deg]</div>
        <div><LegendLine color="#2f7a40" />Ebo3 [deg]</div>
      </Legend>
    </PlotBox>
  )
}

function ChargePlot() {
  return (
    <PlotBox>
      <Plot title="SOC_A" ticks={[1, 0.995, 0.99, 0.985, 0.98, 0.975]} minor={[]} yOf={socY} top={5.500} bottom={198} unit={(v) => v.toFixed(3)}>
        <path d="M48 40 75 99 103.500 166 124 84C129 64 136 42 165 40.500L182 40H392.500L413.500 90" fill="none" stroke="#7a7ac0" />
        <circle cx="413.500" cy="91" r="1.500" fill="#1428c0" />
      </Plot>
      <Readout w={144}>
        <ReadoutLine color="#333">Time = 4128</ReadoutLine>
        <ReadoutLine color="#2a3ab0">(SOC_A) = 0.99164788204875</ReadoutLine>
      </Readout>
      <Legend>
        <div><LegendLine color="#4a4ab0" />SOC_A</div>
      </Legend>
    </PlotBox>
  )
}

function MainRibbon() {
  return (
    <Ribbon>
      <Group w={280}>
        <GroupBody>
          <ToolButton dim><Translate />翻译</ToolButton>
          <ToolButton dim><PlayRound size={20} color="#999" ring={1} />仿真</ToolButton>
          <ToolButton><PauseRound />暂停</ToolButton>
          <ToolButton><StopRound />停止</ToolButton>
          <ToolButton w={42}><SimSetup />仿真设置</ToolButton>
          <Separator />
          <Fields labelW={31} w={48} after={7}>
            <label htmlFor="stop">停止:</label>
            <Field id="stop" defaultValue="5460" />
            <label htmlFor="algo">算法:</label>
            <SelectBox>
              <select id="algo"><option>Rkfix4</option></select>
              <Chevron />
            </SelectBox>
            <Check><input type="checkbox" />同步</Check>
            <Field disabled aria-label="同步" defaultValue="1" />
          </Fields>
          <RadioStack top={6} gap={8} size={9}>
            <label><input type="radio" name="arch" defaultChecked />x86</label>
            <label><input type="radio" name="arch" />x64</label>
          </RadioStack>
        </GroupBody>
        <GroupName>仿真</GroupName>
      </Group>

      <Group w={122}>
        <GroupBody inset={2}>
          <ToolButton><CurveIcon />曲线<Caret /></ToolButton>
          <ToolButton><GraphIcon />图形<Caret /></ToolButton>
          <ToolButton><Film color={BLUE}><path d="M11 6v8M7 10h8" strokeWidth="2" /></Film>动画</ToolButton>
          <Separator gap={4} />
          <RadioStack top={1} gap={5}>
            <label><input type="radio" name="plotMode" />保持</label>
            <label><input type="radio" name="plotMode" />重绘</label>
            <label><input type="radio" name="plotMode" defaultChecked />对比</label>
          </RadioStack>
        </GroupBody>
        <GroupName>图表</GroupName>
      </Group>

      <Group w={237}>
        <GroupBody inset={2}>
          <ToolButton dim><Film><path d="M8.500 6.500v7l6-3.500z" /></Film>播放</ToolButton>
          <ToolButton dim><Film><path d="M8.500 6.500v7M13 6.500v7" strokeWidth="2" /></Film>暂停</ToolButton>
          <ToolButton dim><Film><path d="M6.500 6.500v7M12 7l-3 3 3 3zM16.500 7l-3 3 3 3z" /></Film>重置</ToolButton>
          <Separator gap={3} />
          <Fields labelW={25} w={77} after={3}>
            <label htmlFor="speed">速度:</label>
            <SelectBox off>
              <select id="speed" disabled><option>1</option></select>
              <Chevron color="#888" />
            </SelectBox>
            <label htmlFor="time">时间:</label>
            <Field id="time" disabled defaultValue="0" />
            <span />
            <Slider type="range" aria-label="时间" defaultValue="0" />
          </Fields>
          <ToolButton w={43} tone="#8fbdec" line="#8fbdec"><CursorTag />游标标签</ToolButton>
        </GroupBody>
        <GroupName>动画控制</GroupName>
      </Group>

      <Group w={48}>
        <GroupBody inset={3}>
          <ToolButton w={43} tone="#cfe2f6" line="#b4d0ee"><LayoutIcon />视图布局<Caret /></ToolButton>
        </GroupBody>
        <GroupName>布局</GroupName>
      </Group>
    </Ribbon>
  )
}

function SimulationDock() {
  return (
    <Dock>
      <DockHeader>
        仿真浏览器
        <WindowButtons gap={1}>
          <IconButton w={10} aria-label="浮动"><Restore size={8} /></IconButton>
          <IconButton w={9} aria-label="关闭"><Close size={7} /></IconButton>
        </WindowButtons>
      </DockHeader>
      <DockTools>
        <IconButton w={14}><OpenFile /></IconButton>
        <IconButton w={14}><Save /></IconButton>
        <IconButton w={14}><CurveIcon size={12} /></IconButton>
        <IconButton w={9}><Caret /></IconButton>
        <Separator h={12} gap={2} />
        <IconButton w={14}><AxisIcon /></IconButton>
        <IconButton w={15} active><WaveIcon /></IconButton>
        <IconButton w={14}><ListFilterIcon /></IconButton>
        <IconButton w={14}><WaveIcon /></IconButton>
        <Separator h={12} gap={1} />
        <IconButton w={14}><GridIcon /></IconButton>
        <IconButton><Chevron dir="up" size={7} /></IconButton>
      </DockTools>
      <Search aria-label="搜索" />
      <Progress>
        <div style={{ width: '75%' }} />
        <span>4107.5s</span>
      </Progress>
      <Browser>
        <TreePane>
          <TreeHead><span>名字</span><span>值</span></TreeHead>
          <Tree>
            <TreeRow depth={0} selected>
              <Chevron size={6} /><AxisIcon fill />System_HXC(Running)
            </TreeRow>
            {variables.map((name) =>
              name[0] === '>' ? (
                <TreeRow key={name} depth={1}><Chevron dir="right" />{name.slice(1)}</TreeRow>
              ) : (
                <TreeRow key={name} depth={2}>
                  <Check><input type="checkbox" />{name}</Check>
                </TreeRow>
              )
            )}
          </Tree>
        </TreePane>
        <ScrollY><Chevron dir="up" /><div /><span /><Chevron /></ScrollY>
      </Browser>
      <ScrollX><Chevron dir="left" /><div /><span /><Chevron dir="right" /></ScrollX>
      <DockTabs>
        <DockTab active>仿真浏览器</DockTab>
        <DockTab>模型浏览器</DockTab>
      </DockTabs>
    </Dock>
  )
}

function SubButtons() {
  return (
    <WindowButtons>
      <IconButton aria-label="最小化"><Minimize /></IconButton>
      <IconButton aria-label="最大化"><Maximize /></IconButton>
      <IconButton aria-label="关闭"><Close size={8} /></IconButton>
    </WindowButtons>
  )
}

function Diagram() {
  return (
    <Canvas>
      <Spacecraft />
      <Node x={42} y={0} w={88}>
        <NodeTitle>GNC分…</NodeTitle>
        <Panel bg="#eeabeb" h={102}>
          <Caption>轨道六…</Caption>
          <DataTable h={45} size={8} labelW="52%" align="center">
            <tbody>
              {orbit.map(([name, value]) => (
                <tr key={name}><NameCell>{name}</NameCell><td>{value}</td></tr>
              ))}
            </tbody>
          </DataTable>
          <Caption h={3} />
          <Caption>姿态角（deg）</Caption>
          <Angles><span>8.18157e-5</span><span>-3.64814e-6</span><span>0.15011</span></Angles>
        </Panel>
      </Node>
      <Node x={246} y={1} w={88}>
        <NodeTitle>信息分…</NodeTitle>
        <CommandPanel bg="#f6e26c" h={99}>
          <Caption tone="#3faa1c">已经执行指令</Caption>
          <Commands rows={doneCommands} />
          <Caption tone="#dcae1c">等待执行指令</Caption>
          <Commands rows={waitingCommands} />
        </CommandPanel>
      </Node>
      <Node x={18} y={172} w={119}>
        <NodeTitle>能源分…</NodeTitle>
        <Panel bg="#84c558" h={46}><Values rows={energy} /></Panel>
      </Node>
      <Node x={236} y={172} w={119}>
        <NodeTitle>环热分…</NodeTitle>
        <Panel bg="#7f88dc" h={46}><Values rows={thermal} /></Panel>
      </Node>
      <Node x={247} y={289} w={119}>
        <NodeTitle>推进分…</NodeTitle>
        <Panel bg="#84c558" h={46}><Values rows={propulsion} /></Panel>
      </Node>
      <Node x={18} y={285} w={97}>
        <Clock size={14}>
          <h2>UTC时间</h2>
          <ClockValue size={9}>2022.0年1.0月31.0日</ClockValue>
          <ClockValue>1.0时8.0分48.0秒</ClockValue>
        </Clock>
      </Node>
      <Node x={18} y={331} w={97}>
        <Clock size={13}>
          <h2>仿真时间</h2>
          <ClockValue>4128.0</ClockValue>
        </Clock>
      </Node>
    </Canvas>
  )
}

export default function App() {
  return (
    <Shell>
      <GlobalStyle />
      <TitleBar>
        <QuickAccess>
          <Logo /><NewFile /><OpenFile /><Save /><Undo /><Undo flip />
          <PlayRound /><Translate size={12} /><Caret />
        </QuickAccess>
        <AppTitle>System_HXC[SpaceCraft.TG.System_HXC] - Sysplorer</AppTitle>
        <WindowButtons gap={20}>
          <IconButton aria-label="最小化"><Minimize /></IconButton>
          <IconButton aria-label="还原"><Restore /></IconButton>
          <IconButton aria-label="关闭"><Close /></IconButton>
        </WindowButtons>
      </TitleBar>
      <TabBar>
        <RibbonTab file>文件</RibbonTab>
        <RibbonTab>建模</RibbonTab>
        <RibbonTab>编辑</RibbonTab>
        <RibbonTab active>仿真</RibbonTab>
        <RibbonTab>图表</RibbonTab>
        <RibbonTab>工具</RibbonTab>
        <TabTools>
          <span>窗口</span>
          <IconButton><Caret /></IconButton>
          <SheetIcon /><HelpIcon /><PinIcon />
        </TabTools>
      </TabBar>
      <MainRibbon />
      <Workspace>
        <SimulationDock />
        <SubWindow>
          <SubHeader>
            <GraphIcon size={14} />图形
            <SubButtons />
          </SubHeader>
          <PathBar><CraftIcon /><Caret right /></PathBar>
          <DiagramArea><Diagram /></DiagramArea>
        </SubWindow>
        <SubWindow focused>
          <SubHeader focused>
            <PlotIcon />y(t) 曲线窗口-3 *
            <SubButtons />
          </SubHeader>
          <Plots>
            <AnglePlot />
            <ChargePlot />
          </Plots>
        </SubWindow>
      </Workspace>
      <Pointer width="8" height="13" viewBox="0 0 8 13">
        <path d="M1 1v9l2-1.800L4.500 12l1.500-.8-1.500-3.400H7z" fill="#fff" stroke="#222" strokeWidth=".8" />
      </Pointer>
    </Shell>
  )
}
